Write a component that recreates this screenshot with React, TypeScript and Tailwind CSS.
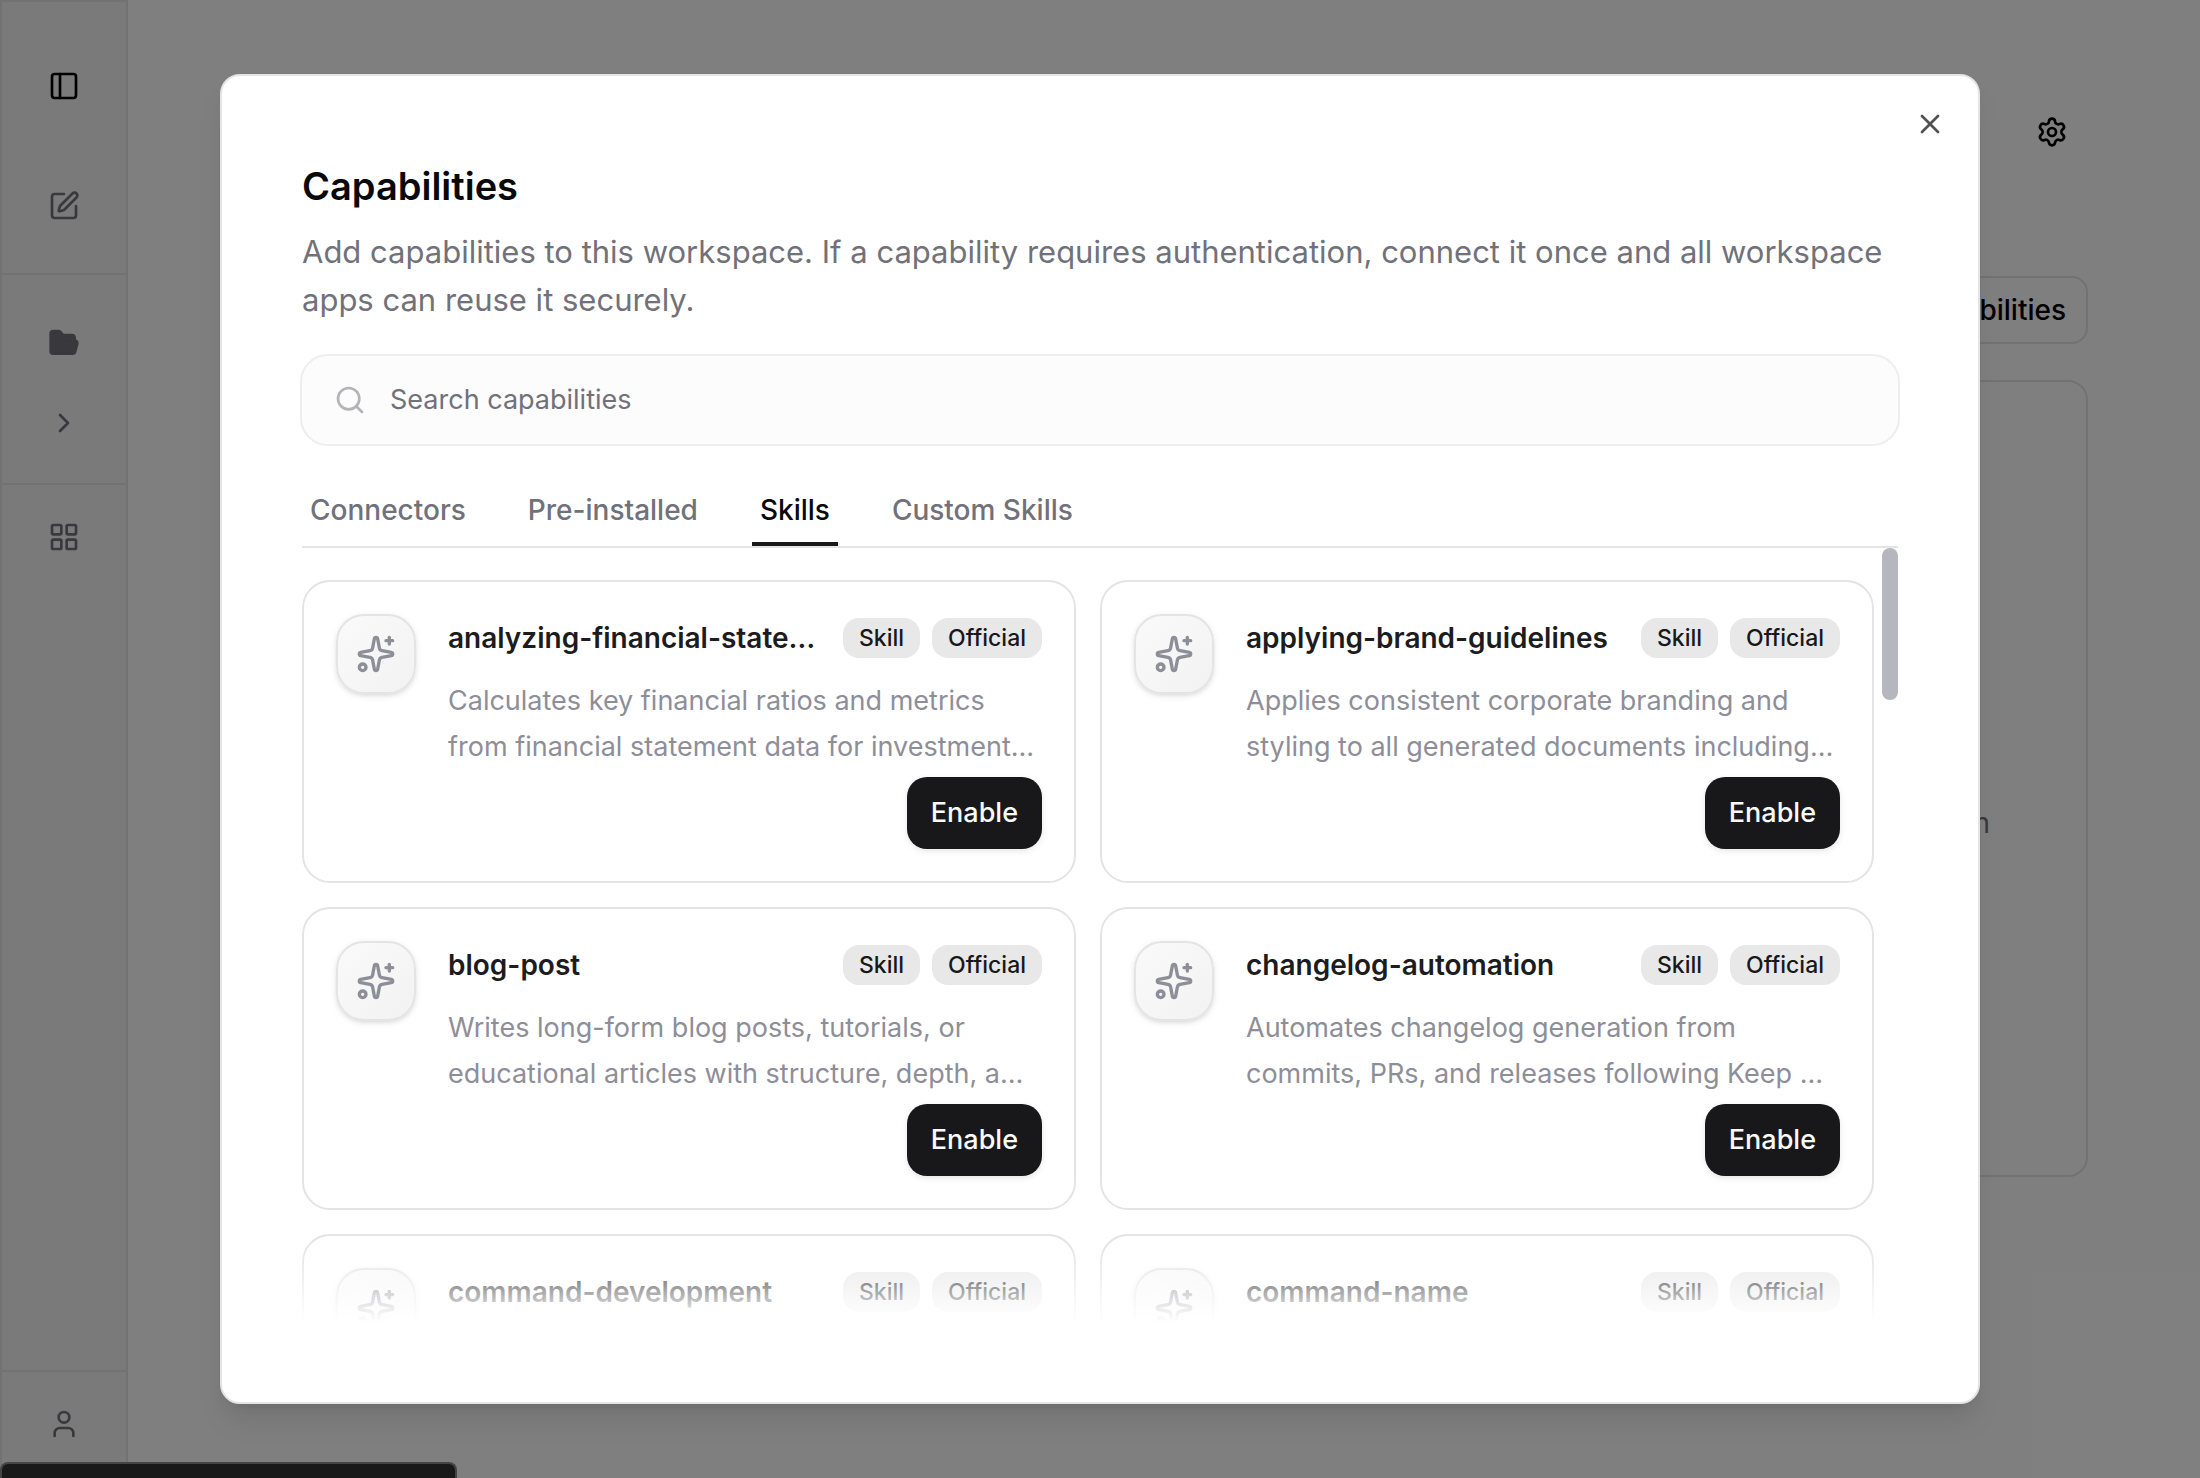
import { useState } from "react";
import {
  ChevronRight,
  FolderOpen,
  LayoutGrid,
  PanelLeft,
  Search,
  Settings,
  Sparkles,
  SquarePen,
  User,
  X,
} from "lucide-react";

type Skill = {
  name: string;
  description: string;
};

const tabs = ["Connectors", "Pre-installed", "Skills", "Custom Skills"];

const skills: Skill[] = [
  {
    name: "analyzing-financial-statements",
    description: "Calculates key financial ratios and metrics from financial statement data for investment…",
  },
  {
    name: "applying-brand-guidelines",
    description: "Applies consistent corporate branding and styling to all generated documents including…",
  },
  {
    name: "blog-post",
    description: "Writes long-form blog posts, tutorials, or educational articles with structure, depth, a…",
  },
  {
    name: "changelog-automation",
    description: "Automates changelog generation from commits, PRs, and releases following Keep …",
  },
  { name: "command-development", description: "" },
  { name: "command-name", description: "" },
];

function Sidebar() {
  return (
    <aside className="flex w-32 shrink-0 flex-col border-2 border-b-0 border-[#e4e4e4] bg-[#f4f4f4] text-[#71717a]">
      <div className="flex h-[273px] flex-col items-center gap-22 border-b-2 border-[#e4e4e4] pt-17">
        <button aria-label="Toggle sidebar" className="text-black">
          <PanelLeft className="size-8" />
        </button>
        <button aria-label="New chat">
          <SquarePen className="size-8" />
        </button>
      </div>
      <div className="flex h-[210px] flex-col items-center gap-12 border-b-2 border-[#e4e4e4] pt-13">
        <button aria-label="Projects">
          <FolderOpen className="size-8 fill-current" />
        </button>
        <button aria-label="Expand">
          <ChevronRight className="size-8" />
        </button>
      </div>
      <button aria-label="Apps" className="mt-9 self-center">
        <LayoutGrid className="size-8" />
      </button>
      <div className="mt-auto flex h-27 flex-col items-center border-t-2 border-[#e4e4e4] pt-9">
        <button aria-label="Account">
          <User className="size-8" />
        </button>
      </div>
    </aside>
  );
}

function Workspace() {
  return (
    <main className="flex flex-1 flex-col items-end px-28 pt-29">
      <button aria-label="Settings" className="mr-5">
        <Settings className="size-8" />
      </button>
      <button className="mt-32 h-17 rounded-2xl border-2 border-[#e4e4e4] px-5 text-[28px] font-medium">
        Capabilities
      </button>
      <section className="mt-9 flex h-[797px] w-full items-center justify-end rounded-[20px] border-2 border-[#e4e4e4] pr-24 text-[28px] text-[#71717a]">
        <p className="pt-22">Add a capability to run</p>
      </section>
    </main>
  );
}

function Tag({ children }: { children: string }) {
  return (
    <span className="flex h-10 shrink-0 items-center rounded-2xl bg-[#e8e8e8] px-4 text-[23px] font-medium text-[#18181b]">
      {children}
    </span>
  );
}

function SkillCard({ skill }: { skill: Skill }) {
  return (
    <article className="flex h-[303px] gap-8 rounded-[28px] border-2 border-[#e4e4e4] bg-white p-8">
      <div className="flex size-20 shrink-0 items-center justify-center rounded-[28px] border-2 border-[#e4e4e4] bg-linear-to-br from-[#fafafa] to-[#f2f2f2] text-[#8e8e98] shadow-[0_2px_6px_rgba(0,0,0,0.1),0_2px_4px_-2px_rgba(0,0,0,0.1)]">
        <Sparkles className="size-10" />
      </div>
      <div className="flex min-w-0 flex-1 flex-col">
        <div className="flex items-center gap-3 pt-1">
          <h3 className="mr-auto truncate pr-1 text-[28px] leading-10 font-semibold text-[#1c1c1f]">
            {skill.name}
          </h3>
          <Tag>Skill</Tag>
          <Tag>Official</Tag>
        </div>
        <p className="mt-5 line-clamp-2 text-[27px] leading-[46px] text-[#8e8e98]">
          {skill.description}
        </p>
        <button className="mt-auto flex h-18 shrink-0 items-center self-end rounded-[20px] bg-[#18181b] px-6 text-[27px] font-medium text-[#fafafa] shadow-[0_2px_6px_rgba(0,0,0,0.1)]">
          Enable
        </button>
      </div>
    </article>
  );
}

function CapabilitiesDialog() {
  const [activeTab, setActiveTab] = useState("Skills");

  return (
    <div
      role="dialog"
      aria-labelledby="dialog-title"
      className="relative flex h-[90vh] w-4/5 flex-col rounded-[20px] border-2 border-[#e4e4e4] bg-white p-20 shadow-[0_20px_30px_-6px_rgba(0,0,0,0.1),0_8px_12px_-8px_rgba(0,0,0,0.1)]"
    >
      <button aria-label="Close" className="absolute top-8 right-8 text-[#525252]">
        <X className="size-8" />
      </button>

      <h2 id="dialog-title" className="pt-2 text-[38px] leading-[44px] font-semibold text-[#09090b]">
        Capabilities
      </h2>
      <p className="mt-5 text-[31px] leading-12 text-[#71717a]">
        Add capabilities to this workspace. If a capability requires authentication, connect it once and all
        workspace apps can reuse it securely.
      </p>

      <label className="-mx-0.5 mt-[30px] flex h-23 shrink-0 items-center gap-6 rounded-[28px] border-2 border-[#eeeeee] bg-[#fcfcfc] px-8">
        <Search className="size-8 text-[#b4b4b8]" />
        <input
          type="search"
          aria-label="Search capabilities"
          placeholder="Search capabilities"
          className="flex-1 bg-transparent text-[27px] outline-none placeholder:text-[#71717a]"
        />
      </label>

      <div role="tablist" className="mt-8 flex shrink-0 gap-[46px] border-b-2 border-[#e4e4e4]">
        {tabs.map((tab) => (
          <button
            key={tab}
            role="tab"
            aria-selected={tab === activeTab}
            onClick={() => setActiveTab(tab)}
            className={
              tab === activeTab
                ? "h-17 border-b-4 border-[#18181b] px-2 text-[28px] font-medium text-[#09090b]"
                : "h-17 border-b-4 border-transparent px-2 text-[28px] font-medium text-[#71717a]"
            }
          >
            {tab}
          </button>
        ))}
      </div>

      <div className="relative flex min-h-0 flex-1">
        <div className="grid flex-1 grid-cols-2 content-start gap-6 overflow-hidden pt-8 pr-2">
          {skills.map((skill) => (
            <SkillCard key={skill.name} skill={skill} />
          ))}
        </div>
        <div className="h-38 w-4 rounded-full bg-[#b6b6be]" />
        <div className="pointer-events-none absolute inset-x-0 bottom-0 h-20 bg-linear-to-t from-white to-transparent" />
      </div>
    </div>
  );
}

export default function App() {
  return (
    <div className="relative flex h-screen overflow-hidden bg-white font-[Inter,sans-serif] text-black">
      <Sidebar />
      <Workspace />
      <div className="absolute bottom-0 left-0 h-4 w-[457px] rounded-t-lg border-2 border-b-0 border-[#8a8a8a] bg-[#333333]" />
      <div className="absolute inset-0 flex items-center justify-center bg-black/50">
        <CapabilitiesDialog />
      </div>
    </div>
  );
}
